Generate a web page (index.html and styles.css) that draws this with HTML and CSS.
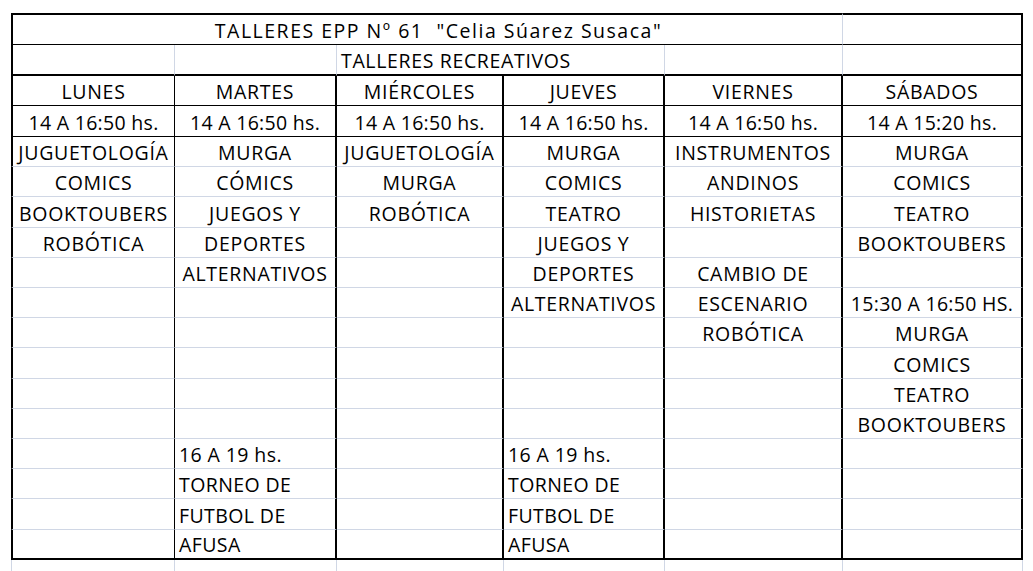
FILE: index.html
```html
<!DOCTYPE html>
<html lang="es">
<head>
<meta charset="utf-8">
<title>Talleres EPP Nº 61</title>
<link rel="stylesheet" href="styles.css">
</head>
<body>
<div class="sheet">
  <!-- row 1 -->
  <div class="cell r1 first title span5 gr">TALLERES EPP Nº 61  "Celia Súarez Susaca"</div>
  <div class="cell r1"></div>
  <!-- row 2 -->
  <div class="cell r2 first gr"></div>
  <div class="cell r2 gr"></div>
  <div class="cell r2 span2 gr left sub">TALLERES RECREATIVOS</div>
  <div class="cell r2 gr"></div>
  <div class="cell r2"></div>
  <!-- row 3 -->
  <div class="cell r3 first thin">LUNES</div>
  <div class="cell r3">MARTES</div>
  <div class="cell r3">MIÉRCOLES</div>
  <div class="cell r3">JUEVES</div>
  <div class="cell r3">VIERNES</div>
  <div class="cell r3">SÁBADOS</div>
  <!-- row 4 -->
  <div class="cell r4 num first thin">14 A 16:50 hs.</div>
  <div class="cell r4 num">14 A 16:50 hs.</div>
  <div class="cell r4 num">14 A 16:50 hs.</div>
  <div class="cell r4 num">14 A 16:50 hs.</div>
  <div class="cell r4 num">14 A 16:50 hs.</div>
  <div class="cell r4 num">14 A 15:20 hs.</div>
  <!-- content 1 -->
  <div class="cell row first thin">JUGUETOLOGÍA</div>
  <div class="cell row">MURGA</div>
  <div class="cell row">JUGUETOLOGÍA</div>
  <div class="cell row">MURGA</div>
  <div class="cell row">INSTRUMENTOS</div>
  <div class="cell row">MURGA</div>
  <!-- content 2 -->
  <div class="cell row first thin">COMICS</div>
  <div class="cell row">CÓMICS</div>
  <div class="cell row">MURGA</div>
  <div class="cell row">COMICS</div>
  <div class="cell row">ANDINOS</div>
  <div class="cell row">COMICS</div>
  <!-- content 3 -->
  <div class="cell row first thin">BOOKTOUBERS</div>
  <div class="cell row">JUEGOS Y</div>
  <div class="cell row">ROBÓTICA</div>
  <div class="cell row">TEATRO</div>
  <div class="cell row">HISTORIETAS</div>
  <div class="cell row">TEATRO</div>
  <!-- content 4 -->
  <div class="cell row first thin">ROBÓTICA</div>
  <div class="cell row">DEPORTES</div>
  <div class="cell row"></div>
  <div class="cell row">JUEGOS Y</div>
  <div class="cell row"></div>
  <div class="cell row">BOOKTOUBERS</div>
  <!-- content 5 -->
  <div class="cell row first thin"></div>
  <div class="cell row">ALTERNATIVOS</div>
  <div class="cell row"></div>
  <div class="cell row">DEPORTES</div>
  <div class="cell row">CAMBIO DE</div>
  <div class="cell row"></div>
  <!-- content 6 -->
  <div class="cell row first thin"></div>
  <div class="cell row"></div>
  <div class="cell row"></div>
  <div class="cell row">ALTERNATIVOS</div>
  <div class="cell row">ESCENARIO</div>
  <div class="cell row num">15:30 A 16:50 HS.</div>
  <!-- content 7 -->
  <div class="cell row first thin"></div>
  <div class="cell row"></div>
  <div class="cell row"></div>
  <div class="cell row"></div>
  <div class="cell row">ROBÓTICA</div>
  <div class="cell row">MURGA</div>
  <!-- content 8 -->
  <div class="cell row first thin"></div>
  <div class="cell row"></div>
  <div class="cell row"></div>
  <div class="cell row"></div>
  <div class="cell row"></div>
  <div class="cell row">COMICS</div>
  <!-- content 9 -->
  <div class="cell row first thin"></div>
  <div class="cell row"></div>
  <div class="cell row"></div>
  <div class="cell row"></div>
  <div class="cell row"></div>
  <div class="cell row">TEATRO</div>
  <!-- content 10 -->
  <div class="cell row first thin"></div>
  <div class="cell row"></div>
  <div class="cell row"></div>
  <div class="cell row"></div>
  <div class="cell row"></div>
  <div class="cell row">BOOKTOUBERS</div>
  <!-- content 11 -->
  <div class="cell row first thin"></div>
  <div class="cell row left">16 A 19 hs.</div>
  <div class="cell row"></div>
  <div class="cell row left">16 A 19 hs.</div>
  <div class="cell row"></div>
  <div class="cell row"></div>
  <!-- content 12 -->
  <div class="cell row first thin"></div>
  <div class="cell row left">TORNEO DE</div>
  <div class="cell row"></div>
  <div class="cell row left">TORNEO DE</div>
  <div class="cell row"></div>
  <div class="cell row"></div>
  <!-- content 13 -->
  <div class="cell row first thin"></div>
  <div class="cell row left">FUTBOL DE</div>
  <div class="cell row"></div>
  <div class="cell row left">FUTBOL DE</div>
  <div class="cell row"></div>
  <div class="cell row"></div>
  <!-- content 14 -->
  <div class="cell row last first thin"></div>
  <div class="cell row last left">AFUSA</div>
  <div class="cell row last"></div>
  <div class="cell row last left">AFUSA</div>
  <div class="cell row last"></div>
  <div class="cell row last"></div>
  <!-- below the table: sheet gridlines -->
  <div class="below first"></div>
  <div class="below"></div>
  <div class="below"></div>
  <div class="below"></div>
  <div class="below"></div>
  <div class="below"></div>
</div>
</body>
</html>
```
FILE: styles.css
```css
html, body {
  margin: 0;
  padding: 0;
  background: #ffffff;
}

body {
  font-family: "Open Sans", "Noto Sans", sans-serif;
  color: #000;
  overflow: hidden;
}

.sheet {
  display: grid;
  grid-template-columns: 164px 162px 167px 161px 178px 180px;
  grid-template-rows: 32px 31px 30px 31px repeat(14, 30.21px) 12px;
  margin: 13px 0 0 11px;
  width: 1012px;
}

.cell {
  box-sizing: border-box;
  display: flex;
  align-items: flex-end;
  justify-content: center;
  white-space: pre;
  overflow: visible;
  font-size: 19.5px;
  line-height: 20px;
  padding-bottom: 3px;
  border-right: 2px solid #000;
  border-bottom: 1px solid #d0d7e5;
  letter-spacing: 0.7px;
}

.cell.num {
  letter-spacing: 0.3px;
}

.cell.thin {
  border-right-width: 1px;
}

.cell.first {
  border-left: 2px solid #000;
}

.cell.gr {
  border-right: 1px solid #d0d7e5;
}

.cell.r1 {
  border-top: 2px solid #000;
  border-bottom: 1px solid #000;
}

.cell.r2 {
  border-bottom: 2px solid #000;
}

.cell.r3,
.cell.r4 {
  border-bottom: 1px solid #000;
}

.cell.last {
  border-bottom: 2px solid #000;
}

.span5 {
  grid-column: span 5;
}

.span2 {
  grid-column: span 2;
}

.title {
  padding-left: 22px;
  letter-spacing: 1.5px;
}

.left {
  justify-content: flex-start;
  padding-left: 4px;
  letter-spacing: 0.4px;
}

.sub {
  letter-spacing: 0.65px;
}

.below {
  box-sizing: border-box;
  border-right: 1px solid #d0d7e5;
}

.below.first {
  border-left: 1px solid #d0d7e5;
}
```
